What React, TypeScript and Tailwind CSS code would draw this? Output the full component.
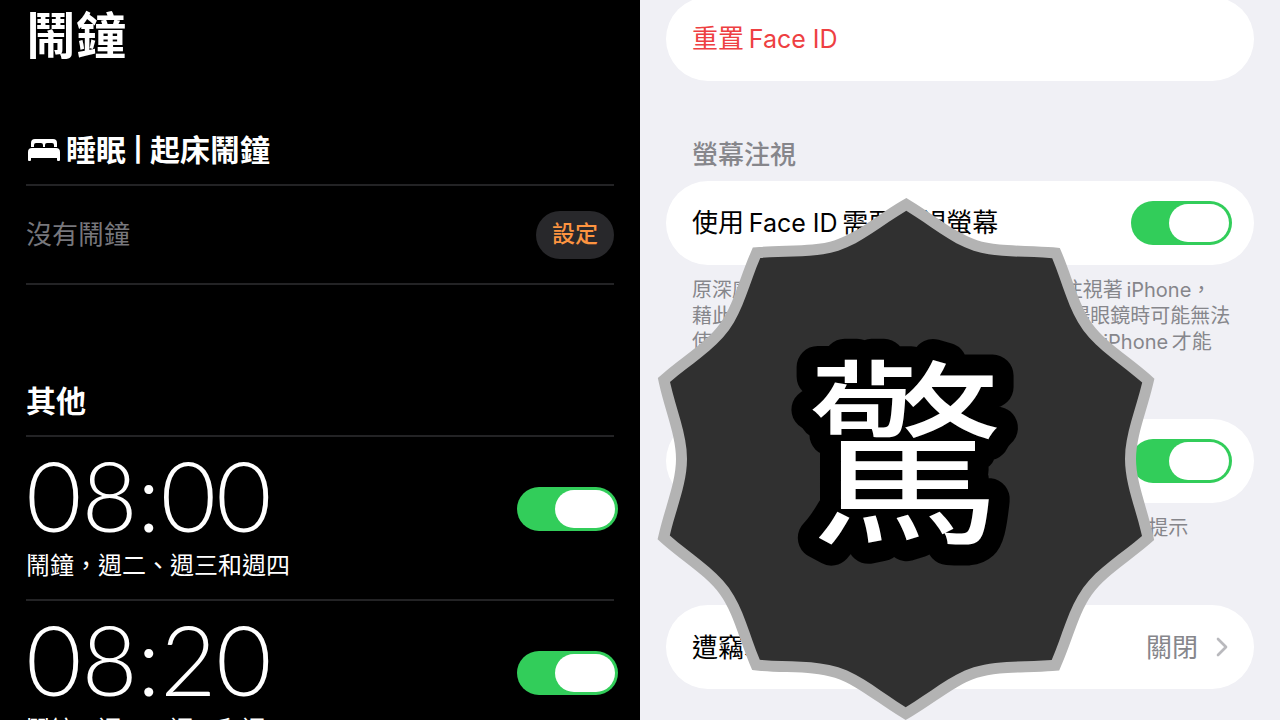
import type { ReactNode } from "react";
import { ChevronRight } from "lucide-react";

const alarms = [
  { time: "08:00", label: "鬧鐘，週二、週三和週四" },
  { time: "08:20", label: "鬧鐘，週二、週三和週四" },
];

// Ten-pointed badge outline, centred on 0,0.
function starPath() {
  const at = (x: number, y: number, turn: number) => {
    const a = (turn * Math.PI) / 180;
    const px = x * Math.cos(a) - y * Math.sin(a);
    const py = x * Math.sin(a) + y * Math.cos(a);
    return `${px.toFixed(1)} ${py.toFixed(1)}`;
  };
  let d = "M219 0";
  for (let turn = 0; turn < 360; turn += 36) {
    const next = turn + 36;
    d += ` C${at(219, 25, turn)} ${at(230, 50, turn)} ${at(236, 77, turn)}`;
    d += ` C${at(230, -50, next)} ${at(219, -25, next)} ${at(219, 0, next)}`;
  }
  return `${d}Z`;
}

function Toggle({ id }: { id: string }) {
  return (
    <input
      id={id}
      type="checkbox"
      role="switch"
      defaultChecked
      className="relative h-11 w-[101px] shrink-0 cursor-pointer appearance-none rounded-full bg-gray-300 before:absolute before:left-[3px] before:top-[3px] before:h-[38px] before:w-[60px] before:rounded-full before:bg-white before:content-[''] checked:bg-[#32cd5a] checked:before:left-[38px]"
    />
  );
}

function BedIcon() {
  return (
    <svg viewBox="0 0 32 22" className="h-[22px] w-8" fill="currentColor" aria-hidden="true">
      <path d="M3 8V4a4 4 0 0 1 4-4h18a4 4 0 0 1 4 4v4h-3V6a2 2 0 0 0-2-2h-5a2 2 0 0 0-2 2v2h-2V6a2 2 0 0 0-2-2H8a2 2 0 0 0-2 2v2z" />
      <path d="M0 13a4 4 0 0 1 4-4h24a4 4 0 0 1 4 4v8a1 1 0 0 1-1 1h-1a1 1 0 0 1-1-1v-2H3v2a1 1 0 0 1-1 1H1a1 1 0 0 1-1-1z" />
    </svg>
  );
}

function SectionTitle({ children }: { children: ReactNode }) {
  return (
    <h2 className="border-b-2 border-[#232325] pb-3.5 text-[30px] font-bold leading-10">
      {children}
    </h2>
  );
}

function AlarmPanel() {
  return (
    <section className="bg-black px-[26px] pt-1.5 text-white">
      <h1 className="text-[50px] font-bold leading-[60px]">鬧鐘</h1>

      <div className="mt-16">
        <SectionTitle>
          <span className="flex items-center pl-0.5">
            <BedIcon />
            <span className="ml-1.5">睡眠</span>
            <span className="w-6 text-center text-2xl font-bold leading-10">|</span>
            <span>起床鬧鐘</span>
          </span>
        </SectionTitle>
        <div className="flex h-[99px] items-center justify-between border-b-2 border-[#232325]">
          <p className="text-[26px] text-[#77777c]">沒有鬧鐘</p>
          <button className="h-12 rounded-full bg-[#28282b] px-4 text-[23px] font-medium text-[#fd9440]">
            設定
          </button>
        </div>
      </div>

      <div className="mt-24">
        <SectionTitle>其他</SectionTitle>
        <ul>
          {alarms.map((alarm, i) => (
            <li
              key={alarm.time}
              className="flex h-[164px] items-start justify-between border-b-2 border-[#232325] pt-2.5"
            >
              <label htmlFor={`alarm-${i}`}>
                <span className="block font-['Lato',sans-serif] text-8xl font-light leading-[96px]">
                  {alarm.time}
                </span>
                <span className="block text-2xl leading-[46px]">{alarm.label}</span>
              </label>
              <div className="-mr-1 pt-10">
                <Toggle id={`alarm-${i}`} />
              </div>
            </li>
          ))}
        </ul>
      </div>
    </section>
  );
}

function Card({ children }: { children: ReactNode }) {
  return (
    <div className="flex h-[84px] items-center justify-between rounded-full bg-white pl-[26px] pr-[22px] text-[26px]">
      {children}
    </div>
  );
}

function Note({ children }: { children: ReactNode }) {
  return (
    <p className="mb-16 mt-3 whitespace-nowrap px-[26px] text-xl leading-[26px] text-[#86868b]">
      {children}
    </p>
  );
}

function Badge() {
  return (
    <svg
      viewBox="-250 -262 500 524"
      className="pointer-events-none absolute left-4 top-[197px] h-[524px] w-[500px]"
      role="img"
      aria-label="驚"
    >
      <path
        d={starPath()}
        fill="#303030"
        stroke="#b3b3b3"
        strokeWidth="22"
        strokeLinejoin="miter"
        paintOrder="stroke"
      />
      <text
        x="-1"
        y="69"
        textAnchor="middle"
        fontSize="200"
        fontWeight="400"
        fill="#fff"
        stroke="#000"
        strokeWidth="42"
        strokeLinejoin="round"
        paintOrder="stroke"
      >
        驚
      </text>
    </svg>
  );
}

function FaceIdPanel() {
  return (
    <section className="relative bg-[#f0f0f5] px-[26px] text-black">
      <div className="-mt-[3px]">
        <Card>
          <button className="text-[#ee3f42]">
            重置&thinsp;<span className="text-[25px]">Face ID</span>
          </button>
        </Card>
      </div>

      <h2 className="mb-2 mt-14 px-[26px] text-[26px] font-medium leading-9 text-[#86868b]">
        螢幕注視
      </h2>
      <Card>
        <label htmlFor="gaze">
          使用&thinsp;<span className="text-[25px]">Face ID</span>&thinsp;需要注視螢幕
        </label>
        <Toggle id="gaze" />
      </Card>
      <Note>
        原深感測 TrueDepth 鏡頭會確認您是否正注視著&thinsp;iPhone，
        <br />
        藉此為&thinsp;Face ID&thinsp;提供額外的安全性。配戴太陽眼鏡時可能無法
        <br />
        使用此功能，您可能需要先將眼鏡取下 並看著 iPhone&thinsp;才能
      </Note>

      <Card>
        <label htmlFor="aware">螢幕注視感知功能</label>
        <Toggle id="aware" />
      </Card>
      <Note>iPhone 會在調暗螢幕前先檢查您是否正注視著 畫面提示</Note>

      <Card>
        <span>遭竊裝置防護</span>
        <a href="#theft" className="-mr-1.5 flex items-center gap-2 text-[#86868b]">
          關閉
          <ChevronRight className="h-8 w-8 text-[#b9b9bd]" />
        </a>
      </Card>

      <Badge />
    </section>
  );
}

export default function App() {
  return (
    <main className="grid h-screen grid-cols-2 overflow-hidden font-['Inter','Noto_Sans_CJK_TC',sans-serif]">
      <AlarmPanel />
      <FaceIdPanel />
    </main>
  );
}
